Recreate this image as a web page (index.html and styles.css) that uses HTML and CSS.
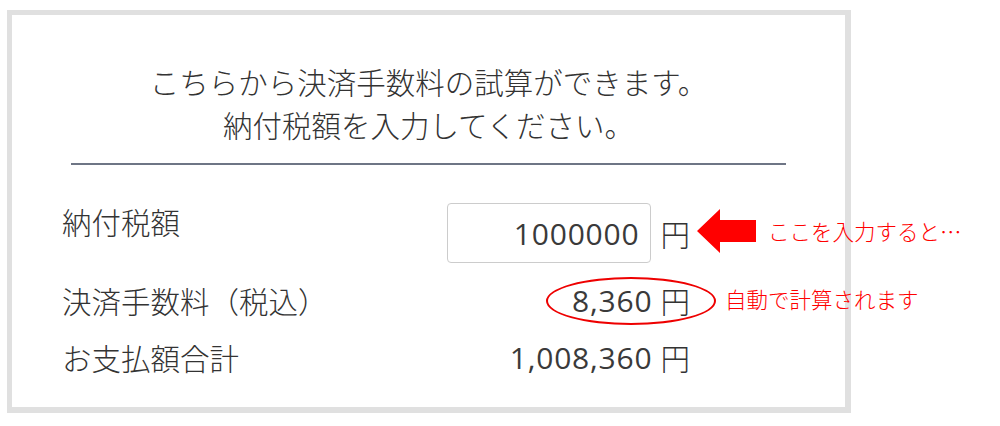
FILE: index.html
```html
<!DOCTYPE html>
<html lang="ja">
<head>
<meta charset="utf-8">
<link rel="stylesheet" href="styles.css">
</head>
<body>
<div class="page">
  <div class="card">
    <div class="intro">
      <p class="intro-line">こちらから決済手数料の試算ができます。</p>
      <p class="intro-line">納付税額を入力してください。</p>
    </div>
    <hr class="divider">
    <div class="rows">
      <div class="row row-input">
        <div class="label">納付税額</div>
        <div class="value">
          <div class="input-box"><span class="num">1000000</span></div>
          <span class="yen">円</span>
        </div>
      </div>
      <div class="row">
        <div class="label">決済手数料（税込）</div>
        <div class="value"><span class="num">8,360</span><span class="yen spaced">円</span></div>
      </div>
      <div class="row">
        <div class="label">お支払額合計</div>
        <div class="value"><span class="num">1,008,360</span><span class="yen spaced">円</span></div>
      </div>
    </div>

    <svg class="arrow" width="60" height="44" viewBox="0 0 60 44" aria-hidden="true">
      <polygon points="0,22 23,0 23,11 59,11 59,33 23,33 23,44" fill="#ff0000"/>
    </svg>
    <div class="note note-input">ここを入力すると…</div>
    <div class="ring"></div>
    <div class="note note-auto">自動で計算されます</div>
  </div>
</div>
</body>
</html>
```

FILE: styles.css
```css
html, body {
  margin: 0;
  padding: 0;
  background: #ffffff;
}

body {
  font-family: "Noto Sans CJK JP", "Noto Sans", sans-serif;
  font-weight: 300;
  color: #333333;
}

.page {
  padding: 10px 0 0 7px;
}

.card {
  position: relative;
  box-sizing: border-box;
  width: 844px;
  height: 403px;
  border: 5px solid #e0e0e0;
  border-right-width: 6px;
  border-bottom-width: 6px;
  background: #ffffff;
  padding-top: 45px;
}

.intro {
  text-align: center;
}

.intro-line {
  margin: 0;
  font-size: 29.5px;
  line-height: 43px;
}

.divider {
  margin: 17px 59px 0 59px;
  border: 0;
  height: 2px;
  background: #6e7585;
}

.rows {
  margin: 38px 0 0 50px;
  width: 628px;
  display: flex;
  flex-direction: column;
  gap: 17px;
}

.row {
  display: flex;
  justify-content: space-between;
  align-items: center;
  height: 40px;
  font-size: 29.5px;
}

.row-input {
  height: 60px;
  align-items: flex-start;
}

.row-input .label {
  line-height: 36px;
}

.value {
  display: flex;
  align-items: center;
}

.row-input .value {
  height: 60px;
}

.input-box {
  box-sizing: border-box;
  width: 204px;
  height: 60px;
  border: 1px solid #cccccc;
  border-radius: 4px;
  display: flex;
  align-items: center;
  justify-content: flex-end;
  padding-right: 11px;
}

.num {
  font-family: "Open Sans", "Noto Sans CJK JP", sans-serif;
  font-weight: 400;
  font-size: 30px;
  letter-spacing: 0.8px;
  color: #3a3a3a;
}

.yen {
  margin-left: 9px;
}

.yen.spaced {
  margin-left: 8px;
}

.arrow {
  position: absolute;
  left: 685px;
  top: 194px;
}

.note {
  position: absolute;
  color: #ff0000;
  font-size: 21.5px;
  line-height: 1;
  white-space: nowrap;
}

.note-input {
  left: 756px;
  top: 205px;
}

.note-auto {
  left: 713px;
  top: 273px;
}

.ring {
  position: absolute;
  left: 534px;
  top: 262px;
  width: 170px;
  height: 48px;
  box-sizing: border-box;
  border: 2px solid #ee0000;
  border-radius: 50%;
}
```
